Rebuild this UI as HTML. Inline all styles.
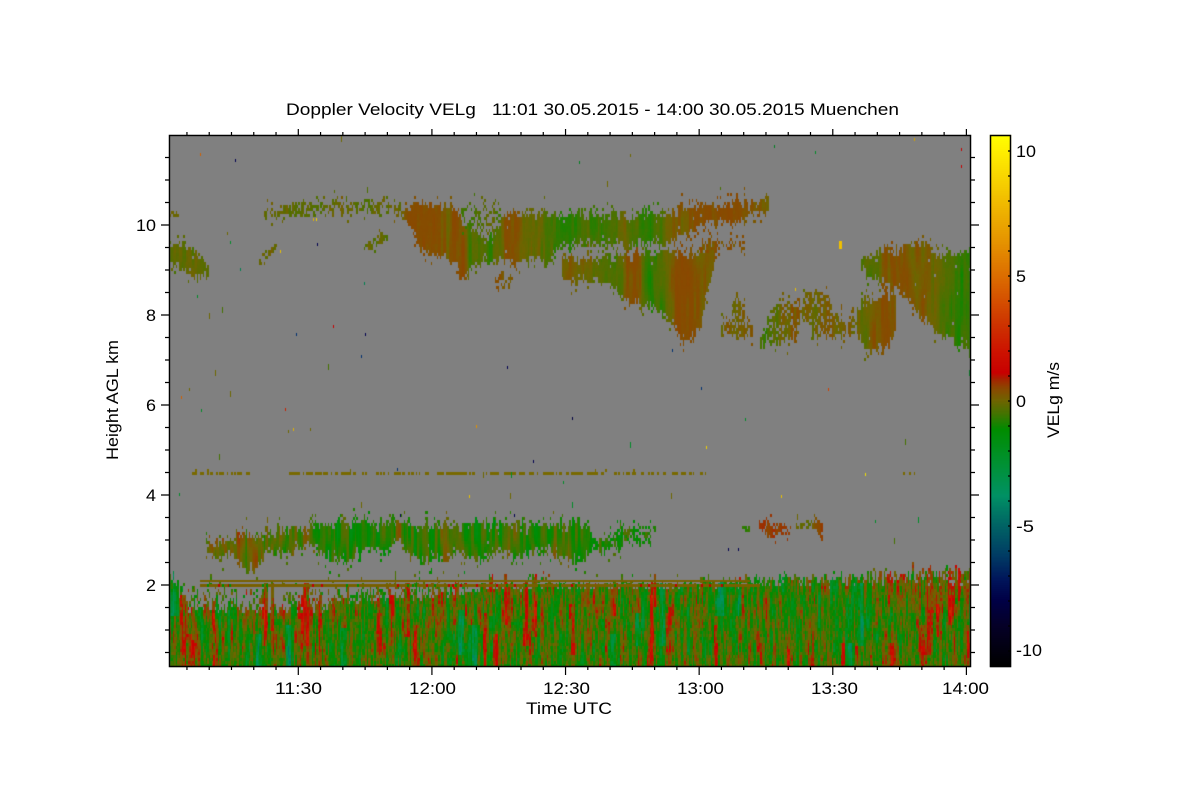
<!DOCTYPE html>
<html><head><meta charset="utf-8"><style>
html,body{margin:0;padding:0;background:#fff;width:1200px;height:800px;overflow:hidden}
canvas,svg{position:absolute;left:0;top:0}
text{font-family:"Liberation Sans",sans-serif;font-size:16.5px;fill:#000}
</style></head><body>
<canvas id="c" width="1200" height="800"></canvas>
<svg width="1200" height="800" viewBox="0 0 1200 800">
<g fill="none" stroke="#000" stroke-width="1.5">
<rect x="169.5" y="135.5" width="801" height="531"/>
<rect x="990.5" y="135.5" width="20" height="531"/>
<path id="t" stroke-width="1.2"/>
</g>
<text x="286" y="115" textLength="613" lengthAdjust="spacingAndGlyphs" xml:space="preserve">Doppler Velocity VELg   11:01 30.05.2015 - 14:00 30.05.2015 Muenchen</text>
<text x="136" y="231" textLength="20" lengthAdjust="spacingAndGlyphs">10</text>
<text x="146" y="321" textLength="10" lengthAdjust="spacingAndGlyphs">8</text>
<text x="146" y="411" textLength="10" lengthAdjust="spacingAndGlyphs">6</text>
<text x="146" y="501" textLength="10" lengthAdjust="spacingAndGlyphs">4</text>
<text x="146" y="591" textLength="10" lengthAdjust="spacingAndGlyphs">2</text>
<text x="275" y="694" textLength="47" lengthAdjust="spacingAndGlyphs">11:30</text>
<text x="409" y="694" textLength="47" lengthAdjust="spacingAndGlyphs">12:00</text>
<text x="543" y="694" textLength="47" lengthAdjust="spacingAndGlyphs">12:30</text>
<text x="677" y="694" textLength="47" lengthAdjust="spacingAndGlyphs">13:00</text>
<text x="811" y="694" textLength="47" lengthAdjust="spacingAndGlyphs">13:30</text>
<text x="942" y="694" textLength="47" lengthAdjust="spacingAndGlyphs">14:00</text>
<text x="526" y="714" textLength="86" lengthAdjust="spacingAndGlyphs">Time UTC</text>
<text transform="translate(118,460) rotate(-90)" textLength="120" lengthAdjust="spacingAndGlyphs">Height AGL km</text>
<text transform="translate(1059,438) rotate(-90)" textLength="76" lengthAdjust="spacingAndGlyphs">VELg m/s</text>
<text x="1016" y="157" textLength="20" lengthAdjust="spacingAndGlyphs">10</text>
<text x="1016" y="282" textLength="10" lengthAdjust="spacingAndGlyphs">5</text>
<text x="1016" y="407" textLength="10" lengthAdjust="spacingAndGlyphs">0</text>
<text x="1016" y="532" textLength="18" lengthAdjust="spacingAndGlyphs">-5</text>
<text x="1016" y="656" textLength="26" lengthAdjust="spacingAndGlyphs">-10</text>
</svg>
<script>
var ctx=document.getElementById('c').getContext('2d');
ctx.fillStyle='#fff';ctx.fillRect(0,0,1200,800);
ctx.fillStyle='#808080';ctx.fillRect(170,136,800,531);
var CM=[[-10.6,0,0,0],[-9,5,0,40],[-8,0,0,70],[-7.2,0,20,90],[-6.2,0,60,100],[-5,0,100,100],[-3.8,0,145,100],[-2.5,0,145,50],[-1.16,0,140,0],[-.5,70,115,0],[0,112,100,0],[.5,140,70,0],[.85,165,35,0],[1.1,200,0,0],[2,205,20,0],[3,205,50,0],[5,220,110,0],[6.44,230,150,0],[10,255,240,0],[10.6,255,255,0]];
function col(v){
  if(v<=-10.6)v=-10.6;if(v>=10.6)v=10.6;
  for(var i=1;i<CM.length;i++){if(v<=CM[i][0]){var a=CM[i-1],b=CM[i],f=(v-a[0])/(b[0]-a[0]);
    return 'rgb('+Math.round(a[1]+(b[1]-a[1])*f)+','+Math.round(a[2]+(b[2]-a[2])*f)+','+Math.round(a[3]+(b[3]-a[3])*f)+')';}}
  return '#ff0';
}
var s=12345;function R(){s|=0;s=s+0x6D2B79F5|0;var t=Math.imul(s^s>>>15,1|s);t=t+Math.imul(t^t>>>7,61|t)^t;return((t^t>>>14)>>>0)/4294967296;}
function H(a,b){var q=Math.sin(a*127.1+b*311.7)*43758.5453;return q-Math.floor(q);}
function N(x,y){var a=Math.floor(x),b=Math.floor(y),f=x-a,g=y-b;f=f*f*(3-2*f);g=g*g*(3-2*g);
  return (H(a,b)*(1-f)+H(a+1,b)*f)*(1-g)+(H(a,b+1)*(1-f)+H(a+1,b+1)*f)*g;}
function L(p,x){if(x<=p[0][0])return p[0][1];for(var i=1;i<p.length;i++){if(x<=p[i][0]){var f=(x-p[i-1][0])/(p[i][0]-p[i-1][0]);return p[i-1][1]+(p[i][1]-p[i-1][1])*f;}}return p[p.length-1][1];}
var CW=1.49,CH=3;
function px(i){return Math.round(170+i*CW);}
function cell(i,j,c){ctx.fillStyle=c;var a=px(i),b=px(i+1);ctx.fillRect(a,136+j*CH,Math.max(1,b-a),CH);}
function cl(t,b,v,o){o=o||{};var e=o.e==null?2:o.e,d=o.d==null?.93:o.d,n=o.n==null?.3:o.n,sd=R()*100,free=o.free;
  var x0=t[0][0],x1=t[t.length-1][0];
  for(var i=Math.floor((x0-170)/CW);i<=(x1-170)/CW;i++){var x=170+i*CW;if(i<0||i>536)continue;
    var T=L(t,x)+(N(x/2,sd)-.5)*3*e+(R()-.5)*e*1.6,B=L(b,x)+(N(x/2,sd+9)-.5)*3*e+(R()-.5)*e*1.6;
    for(var j=0;j<177;j++){var y=137.5+j*CH;var p=0;
      if(y>=T&&y<=B){var ed=Math.min(y-T,B-y);p=ed<5?d*.72:(d>=.85?.997:d);}
      else if((y>T-e-6&&y<T)||(y<B+e+6&&y>B))p=.05;
      if(p>0&&R()<p){
        var w=L(v,x)+n*2*(N(x/2.6+sd,y/28)-.5)+.1*(R()-.5);
        if(!free&&w>.38)w=.38+(w-.38)*.3;
        cell(i,j,col(w));
      }
    }
  }
}
/* clouds */
cl([[170,245],[178,241],[188,246],[196,250],[202,258],[208,266]],[[170,268],[180,270],[190,276],[200,279],[208,276]],[[170,-.4],[185,-.15],[208,-.3]]);
cl([[170,213],[178,213]],[[170,217],[178,217]],[[170,-.1],[178,-.1]],{e:1});
cl([[265,210],[275,208],[295,204],[310,203],[325,202],[345,202],[370,200],[398,203]],[[265,217],[280,215],[295,215],[310,214],[330,214],[350,211],[375,212],[398,213]],[[265,-.1],[295,-.15],[310,-.3],[340,-.05],[370,-.3],[395,-.1]],{d:.8,e:2.5});
cl([[398,205],[420,203],[440,203],[450,205],[458,212],[463,226],[472,224],[480,236]],[[398,215],[405,224],[412,232],[420,252],[440,258],[452,262],[460,278],[466,280],[472,270],[480,266]],[[398,-.1],[405,.3],[418,.48],[440,.42],[447,.1],[455,.42],[462,.48],[470,-.5],[478,-.4],[480,-.2]],{e:2.5});
cl([[462,206],[505,206]],[[462,232],[505,234]],[[462,-.5],[480,-.3],[505,-.4]],{d:.38,e:3});
cl([[478,236],[495,232],[503,214],[530,212],[560,211],[600,212],[640,212],[670,210],[690,205],[720,204],[740,200],[768,198]],[[478,266],[500,264],[530,262],[548,264],[560,248],[600,246],[640,245],[668,245],[680,237],[700,232],[720,224],[735,225],[745,218],[770,212]],[[478,-.3],[490,-.6],[505,.2],[512,.4],[525,-.2],[540,-.2],[555,-.6],[570,-.7],[590,-.5],[605,-.7],[625,-.1],[640,-.7],[660,-.6],[672,.1],[690,.3],[710,.4],[735,.5],[750,.35],[770,.1]],{e:3.5,d:.88});
cl([[563,255],[600,255],[620,256],[640,252],[660,250],[680,250],[695,250],[706,246],[716,240]],[[563,282],[595,283],[615,290],[622,303],[640,306],[660,316],[672,322],[680,342],[692,340],[700,332],[705,300],[716,258]],[[563,.05],[590,.05],[605,-.5],[617,-.5],[628,.4],[636,.45],[648,-.8],[662,-.5],[675,.4],[688,.5],[700,.1],[716,.2]],{e:3,d:.88});
cl([[700,242],[745,242]],[[700,250],[745,250]],[[700,.3],[745,.3]],{d:.5});
cl([[733,300],[737,293],[745,302]],[[733,325],[746,325]],[[733,.05],[746,.05]],{d:.8,e:3});
cl([[722,324],[752,320]],[[722,335],[750,336]],[[722,.05],[752,.1]],{e:2.5});
cl([[760,335],[767,320],[775,303],[800,300],[807,290],[827,292],[833,317],[860,320]],[[760,350],[770,344],[795,342],[800,322],[807,322],[812,335],[830,337],[860,336]],[[760,-.7],[772,-.5],[785,.1],[795,.3],[800,-.1],[830,.1],[860,.1]],{d:.8,e:4});
cl([[857,305],[870,298],[885,293],[895,295]],[[857,335],[865,352],[880,353],[893,340],[897,320]],[[857,-.2],[868,-.1],[875,.35],[885,.45],[897,.1]],{e:4,d:.86});
cl([[860,262],[870,258],[880,248],[887,245],[895,252],[905,245],[915,240],[927,245],[940,255],[955,250],[970,245]],[[860,270],[870,278],[885,285],[893,290],[903,295],[912,305],[920,322],[930,330],[945,337],[958,347],[970,352]],[[860,-.5],[875,-.2],[885,.2],[895,.4],[905,.1],[925,.15],[940,-.3],[950,-.6],[960,-.8],[970,-.5]],{e:3.5});
cl([[365,245],[372,240],[380,233],[387,236]],[[365,249],[372,248],[380,245],[387,243]],[[365,-.2],[387,-.3]],{e:1});
cl([[495,275],[505,273],[512,275]],[[495,285],[503,292],[512,282]],[[495,.3],[512,.3]],{d:.8});
cl([[260,258],[265,250],[277,243]],[[260,263],[265,258],[277,249]],[[260,-.1],[277,-.1]],{e:1,d:.85});
cl([[760,522],[770,522],[790,526]],[[760,530],[768,538],[775,537],[790,532]],[[760,.65],[790,.65]],{e:1,d:.85,n:.2,free:1});
cl([[797,525],[805,520],[815,518],[822,522]],[[797,530],[815,528],[818,538],[822,537]],[[797,-.1],[810,-.3],[816,.5],[822,.7]],{e:1,n:.2,free:1});
cl([[743,526],[749,526]],[[743,531],[749,531]],[[743,-.8],[749,-.8]],{e:.5});
cl([[204,540],[215,540],[232,537],[240,533],[260,533],[275,528],[310,527],[320,522],[400,520],[410,522],[480,522],[550,523],[555,522],[590,522],[592,537],[620,537],[622,530],[650,530]],
   [[204,548],[215,563],[232,558],[240,572],[255,572],[265,553],[285,556],[310,545],[325,560],[345,562],[365,550],[385,553],[400,545],[420,562],[445,560],[462,552],[480,562],[500,552],[520,558],[545,550],[558,560],[580,563],[592,552],[620,548],[622,540],[650,538]],
   [[204,-.1],[225,.05],[245,.1],[260,-.3],[280,-.6],[310,-.3],[330,-1],[360,-.7],[380,-.9],[400,-.4],[420,-.95],[450,-.4],[480,-.9],[510,-.6],[535,-1],[560,-.3],[580,-.95],[600,-1],[620,-1],[650,-1]],{e:4.5,d:.86,n:.9,free:1});
cl([[610,527],[655,527]],[[610,545],[655,540]],[[610,-1],[655,-1.1]],{d:.3,e:2,free:1});
/* 4.5 km line */
for(var i=0;i<537;i++){var x=170+i*CW;
  if((x>192&&x<250)||(x>289&&x<705)||(x>903&&x<915)){if(N(x/1.8,7.7)>.44)cell(i,112,'rgb(120,105,0)');if(R()<.02)cell(i,111,'rgb(120,105,0)');}
}
/* boundary layer */
var BT=[[170,570],[190,575],[300,580],[450,574],[700,579],[820,578],[900,573],[970,570]];
var BS=[[170,578],[186,612],[320,612],[335,602],[450,598],[470,590],[700,587],[970,585]];
var RED=[[183,4,600,666],[191,3,640,666],[213,2,620,666],[265,3,590,640],[272,2,585,625],[300,2,620,666],[305,4,590,640],[320,2,600,660],[378,3,620,666],[390,2,600,640],[407,3,590,630],[415,3,630,666],[455,2,585,620],[491,3,575,610],[505,2,580,620],[525,3,575,640],[534,3,575,630],[485,2,620,660],[495,2,640,666],[571,3,610,650],[588,2,590,610],[613,2,590,610],[650,3,600,660],[655,3,570,600],[667,3,620,666],[670,2,590,620],[715,2,630,660],[788,2,655,666],[842,2,650,666],[890,3,650,666],[922,3,630,666],[930,2,615,650],[937,2,610,630],[950,3,600,620],[967,2,630,660]];
var TEAL=[[460,3,615,650],[473,4,630,660],[612,3,640,666],[637,3,620,640],[662,3,590,640],[258,3,640,666],[288,3,630,660],[343,3,635,666],[720,6,585,610],[738,3,585,610],[860,4,590,640],[850,3,650,666],[173,4,575,610]];
function bump(list,x,y){var t=0;for(var k=0;k<list.length;k++){var q=list[k];if(y<q[2]-6||y>q[3]+6)continue;var d=(x-q[0])/q[1];t+=Math.exp(-d*d);}return Math.min(t,1.2);}
for(var i=0;i<537;i++){var x=170+i*CW,jt=(N(x/1.6,3.3)-.5)*16+(R()-.5)*8,tp=L(BT,x)+jt,so=L(BS,x)+jt*.3;
  for(var j=125;j<177;j++){var y=137.5+j*CH,p=0;
    if(y>=so)p=.98;else if(y>=tp)p=.12+.5*(y-tp)/(so-tp);else if(y>tp-24)p=.05;
    var rb=bump(RED,x,y),tb=bump(TEAL,x,y);
    if(y>=tp&&y<so&&rb>.6)p=.9;
    if(y>=tp&&y<so&&x>700)p=Math.max(p,.68);
    var nn=N(x/1.4,y/8)*.55+R()*.45;
    if(nn<p||(y>=so&&R()<.965)){
      var w=-.6+2.0*(N(x/3,y/34)-.5)+2.6*(N(x/1,y/12)-.5)+.8*(R()-.5)+1.5*rb*(.55+.9*N(x/1.1+9,y/7))-2.4*tb*(.5+N(x/1.5+3,y/9));
      if(x>880&&x<960&&y<612)w+=.45;
      if(x>780&&x<880&&y<640)w-=.2;
      if(y<tp)w=-.1+(R()-.5)*1.6;
      cell(i,j,col(w));
    }
  }
}
/* double line near 2 km */
ctx.fillStyle='rgb(120,96,0)';ctx.fillRect(200,580,550,2);ctx.fillRect(200,584,560,3);
for(var i=0;i<40;i++){var x=Math.round(200+R()*550);ctx.fillStyle=R()<.5?'rgb(0,140,0)':'rgb(190,0,0)';ctx.fillRect(x,584,2,3);}
/* speckle */
var OL=['rgb(110,105,0)','rgb(110,105,0)','rgb(70,115,0)','rgb(0,140,40)'];
for(var i=0;i<60;i++){var a=Math.floor(R()*537),b=Math.floor(R()*135);var yy=136+b*3;
  if(yy>190&&yy<360&&a>160)continue;ctx.fillStyle=OL[Math.floor(R()*4)];ctx.fillRect(px(a),yy,1,3+3*Math.floor(R()*2));}
var SP=[[200,153,'#d06000'],[235,159,'#000050'],[296,333,'#003070'],[333,325,'#c80000'],[365,333,'#000050'],[361,355,'#003070'],[181,396,'#d06000'],[285,408,'#c82000'],[293,428,'#e0b000'],[310,428,'#6e6900'],[572,417,'#000040'],[476,425,'#e09000'],[397,468,'#003070'],[507,366,'#000050'],[701,387,'#003070'],[706,446,'#f0d000'],[672,349,'#003070'],[828,388,'#d04000'],[795,288,'#e8c000'],[781,495,'#e8c000'],[865,473,'#f0e000'],[774,145,'#008020'],[961,148,'#c80000'],[961,165,'#c80000'],[914,138,'#d0a000'],[579,161,'#008020'],[469,495,'#e8c000'],[317,243,'#000050'],[280,250,'#e8c000'],[316,218,'#f0d000'],[313,218,'#e0b000'],[728,548,'#000050'],[738,548,'#000050'],[514,514,'#000050'],[400,514,'#000050'],[533,460,'#000050'],[240,268,'#008050'],[364,282,'#008050']];
SP.forEach(function(q){ctx.fillStyle=q[2];ctx.fillRect(q[0],q[1],1,3);});
ctx.fillStyle='#f0c000';ctx.fillRect(839,241,3,8);
/* colour bar */
for(var y=135;y<667;y++){ctx.fillStyle=col(10.6-(y-135)/25);ctx.fillRect(990,y,21,1);}
/* ticks */
var d='',k;
for(k=-5;k<=30;k++){var x=298.3+22.27*k,mj=(k%6===0);
  d+='M'+x+' 135V'+(mj?129:132)+'M'+x+' 667V'+(mj?675:670);}
for(k=-3;k<=19;k++){var y=225+22.5*k,mj=((k%4)===0);
  d+='M169 '+y+'H'+(mj?161:165)+'M971 '+y+'H'+(mj?979:975);}
for(k=0;k<=20;k++){var y=151+25*k;d+='M1010 '+y+'H1008';}
document.getElementById('t').setAttribute('d',d);
</script>
</body></html>
